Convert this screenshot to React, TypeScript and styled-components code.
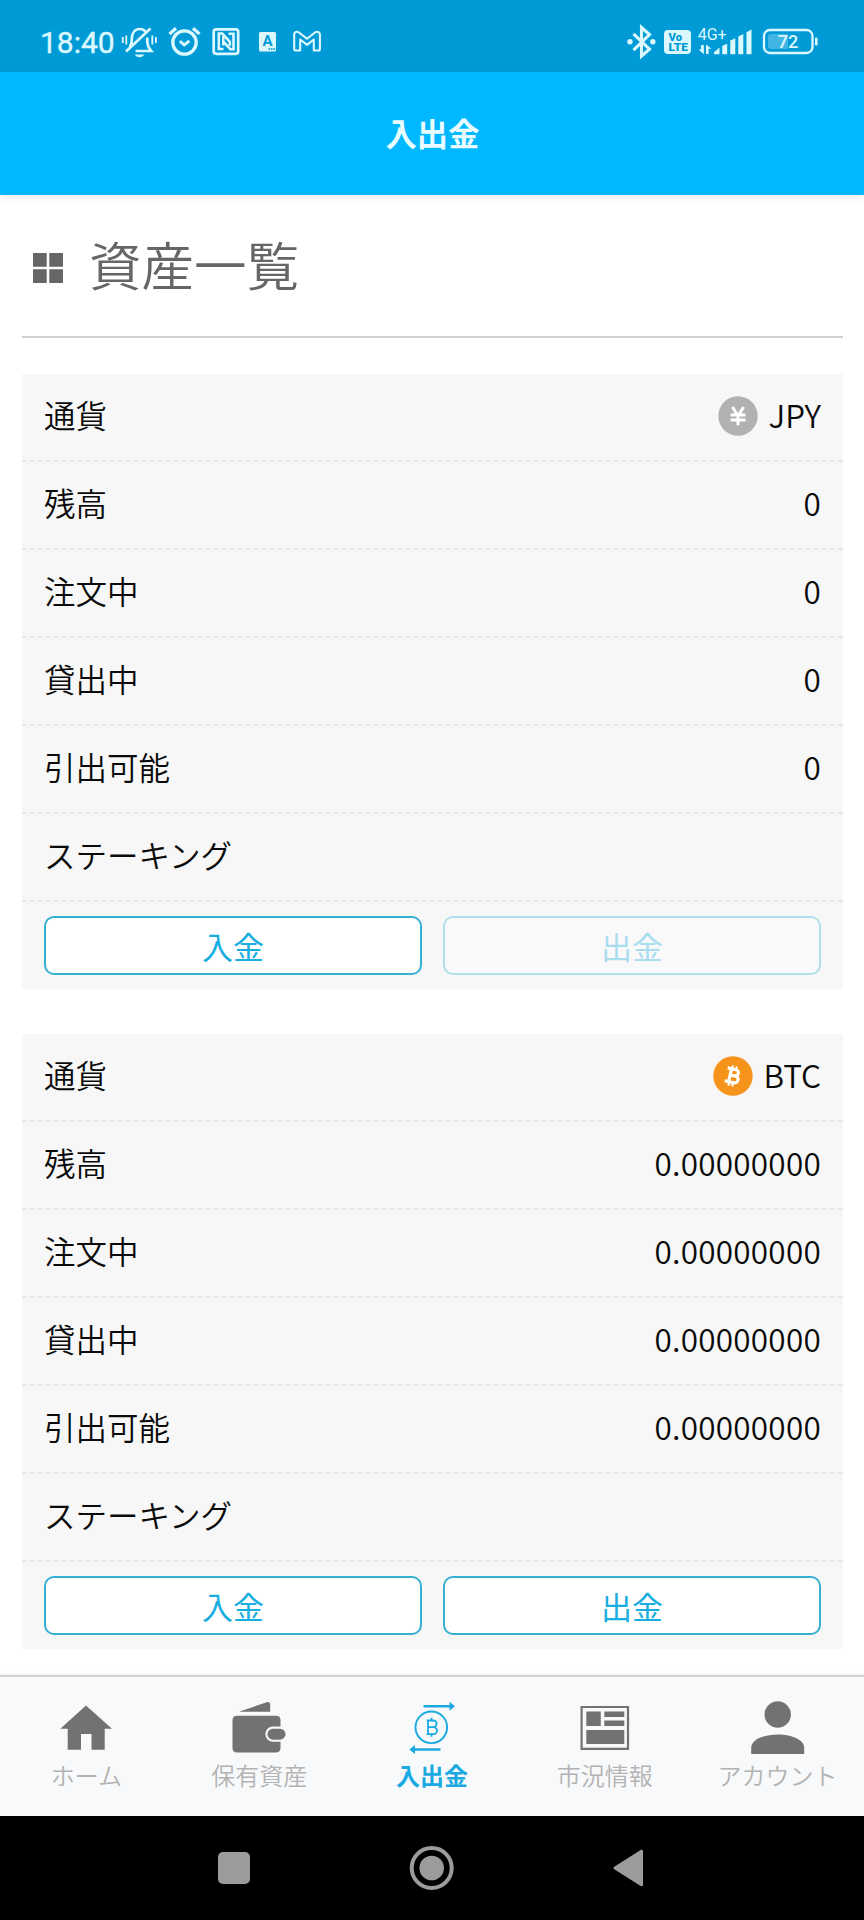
import React from "react";
import styled, { createGlobalStyle } from "styled-components";

const GlobalStyle = createGlobalStyle`
  * { box-sizing: border-box; }
  body {
    margin: 0;
    background: #fff;
    font-family: "Noto Sans CJK JP", sans-serif;
    color: #0a0a0a;
  }
`;

const Screen = styled.div`
  width: 864px;
  height: 1920px;
  display: flex;
  flex-direction: column;
  overflow: hidden;
  background: #fff;
`;

const StatusBar = styled.div`
  height: 72px;
  flex: none;
  display: flex;
  justify-content: space-between;
  padding: 24px 46px 0 40px;
  background: #009bd7;
  color: #dcf8ff;
`;

const StatusGroup = styled.div`
  display: flex;
  height: 36px;
`;

const Clock = styled.span`
  width: 81px;
  font: 400 30px/38px Roboto, sans-serif;
  -webkit-text-stroke: 0.4px currentColor;
`;

const Glyph = styled.svg<{ $gap?: number }>`
  display: block;
  flex: none;
  overflow: visible;
  margin-left: ${(p) => p.$gap ?? 0}px;
`;

const AppBar = styled.header`
  height: 123px;
  flex: none;
  display: flex;
  align-items: center;
  justify-content: center;
  background: #00b8ff;
  color: #e9fcff;
  box-shadow: 0 2px 8px rgba(60, 40, 90, 0.12);
  font-size: 31.3px;
  font-weight: 700;
  line-height: 46px;
  padding: 0 0 2px 1px;
`;

const Content = styled.main`
  flex: 1;
  min-height: 0;
  overflow: hidden;
  padding: 0 21px 0 22px;
`;

const Heading = styled.h1`
  display: flex;
  align-items: center;
  height: 143px;
  margin: 0 0 36px;
  padding: 4px 0 0 11px;
  border-bottom: 2px solid #cfcfcf;
  font-size: 52.5px;
  font-weight: 350;
  line-height: 78px;
  color: #666;
`;

const HeadingText = styled.span`
  margin: -10px 0 0 26px;
`;

const Card = styled.section`
  height: 615px;
  margin-bottom: 45px;
  background: #f7f7f7;
`;

const Row = styled.div`
  display: flex;
  align-items: center;
  justify-content: space-between;
  height: 88px;
  padding: 0 22px 8px;
  font-size: 31.5px;
  line-height: 46px;
  font-weight: 350;
`;

const DashLine = styled.svg`
  display: block;
  width: 100%;
  height: 2px;
  margin-top: -2px;
`;

const Value = styled.span`
  display: flex;
  align-items: center;
  gap: 10px;
`;

const Amount = styled.span`
  letter-spacing: 0.25px;
`;

const CoinIcon = styled.svg`
  width: 40px;
  height: 40px;
  margin-top: 4px;
`;

const Actions = styled.div`
  display: flex;
  gap: 21px;
  padding: 14px 22px;
`;

const ActionButton = styled.button`
  flex: 1;
  height: 59px;
  padding: 1px 0 0;
  border: 2px solid #35b0d2;
  border-radius: 10px;
  background: #fff;
  color: #19aee0;
  font-family: inherit;
  font-size: 31px;
  font-weight: 400;
  line-height: 46px;
  &:disabled { opacity: 0.35; }
`;

const TabBar = styled.nav`
  height: 141px;
  flex: none;
  display: grid;
  grid-template-columns: repeat(5, 1fr);
  border-top: 2px solid #d3d3d4;
  background: #f8f9fb;
  box-shadow: 0 -1px 3px rgba(0, 0, 0, 0.08);
`;

const Tab = styled.a<{ $active?: boolean }>`
  display: flex;
  flex-direction: column;
  align-items: center;
  padding-top: 21px;
  font-size: 24px;
  line-height: 36px;
  white-space: nowrap;
  font-weight: ${(p) => (p.$active ? 700 : 350)};
  color: ${(p) => (p.$active ? "#1ba9e1" : "#b3b3b3")};
`;

const TabIcon = styled.svg`
  display: block;
  width: 56px;
  height: 56px;
  margin-bottom: 3px;
  overflow: visible;
`;

const SystemNav = styled.div`
  height: 104px;
  flex: none;
  display: flex;
  justify-content: center;
  align-items: center;
  gap: 144px;
  background: #000;
`;

const StatusIcons = () => (
  <StatusGroup>
    <Clock>18:40</Clock>
    <Glyph width="36" height="36" viewBox="0 0 36 36" fill="none" stroke="currentColor" strokeWidth="2.700">
      <path d="M8.500 23c2-2 2.300-4 2.300-8 0-6 3.200-10 8-10 2.500 0 4.500 1 5.500 2.500M26.300 13.500v4c0 4 1.500 6.500 4 9.500H14.500M5 27.500 29.500 4.500" />
      <path d="M14 30.500h9c-1 3.500-8 3.500-9 0z" fill="currentColor" stroke="none" />
      <path d="M1.700 13v6M5.300 11.500v9M31.300 11.500v9M34.900 13v6" strokeWidth="1.800" />
    </Glyph>
    <Glyph $gap={11} width="33" height="36" viewBox="0 0 33 36" fill="none" stroke="currentColor">
      <circle cx="16.500" cy="18.500" r="11.700" strokeWidth="3.300" />
      <path d="M1.500 10 8 4.200M25 4.200 31.500 10" strokeWidth="3.200" />
      <path d="m11.800 17.200 4.400 3.600 5.200-4" strokeWidth="2.900" />
    </Glyph>
    <Glyph $gap={11} width="28" height="36" viewBox="0 0 28 36" fill="none" stroke="currentColor" strokeWidth="2.700">
      <rect x="1.700" y="5.300" width="24.500" height="24.500" rx="2.500" />
      <path d="M11.500 25H6.800V9.500h3.500l7.500 8.300v4M11.300 12v9.500M16.500 9.800h5v15.400h-3.200l-7-7.700" strokeWidth="2.600" />
    </Glyph>
    <Glyph $gap={19} width="17" height="36" viewBox="0 0 17 36">
      <rect y="8" width="17" height="19.500" rx="1.500" fill="currentColor" />
      <text x="8.500" y="22" textAnchor="middle" fontSize="15" fontWeight="700" fontFamily="Roboto, sans-serif" fill="#009bd7">A</text>
      <path d="M9.500 25h6.500" stroke="#009bd7" strokeWidth="1.500" strokeDasharray="1.700 0.700" />
    </Glyph>
    <Glyph $gap={17} width="28" height="36" viewBox="0 0 28 36" fill="none" stroke="currentColor" strokeWidth="2.100" strokeLinejoin="round">
      <path d="M7.200 15.500v11H2.700c-1 0-1.500-.6-1.500-1.500V10.500C1.200 7.700 4 7 6 8.500l8 6.300 8-6.300c2-1.500 4.900-.8 4.900 2V25c0 .9-.6 1.500-1.500 1.500h-4.600v-11L14 20.800z" />
    </Glyph>
  </StatusGroup>
);

const SignalIcons = () => (
  <StatusGroup>
    <Glyph width="30" height="36" viewBox="0 0 30 36" fill="none" stroke="currentColor" strokeWidth="3.100">
      <path d="m6.500 9.800 16 15.300-8 6.900V3.500l8 7-16 15.700" />
      <circle cx="3" cy="17.800" r="2.700" fill="currentColor" stroke="none" />
      <circle cx="25.800" cy="17.800" r="2.700" fill="currentColor" stroke="none" />
    </Glyph>
    <Glyph $gap={7} width="27" height="36" viewBox="0 0 27 36" fill="#009bd7" fontFamily="Roboto, sans-serif" fontWeight="900" fontSize="10.500">
      <rect y="6" width="27" height="24" rx="4" fill="currentColor" />
      <text x="4.500" y="16.500" textLength="13.500" lengthAdjust="spacingAndGlyphs">Vo</text>
      <text x="4.500" y="27" textLength="19.500" lengthAdjust="spacingAndGlyphs">LTE</text>
    </Glyph>
    <Glyph $gap={7} width="54" height="36" viewBox="0 0 54 36" fill="currentColor">
      <text x="-0.300" y="15.500" fontSize="16.800" fontFamily="Roboto, sans-serif" textLength="29" lengthAdjust="spacingAndGlyphs">4G+</text>
      <path d="M3 21v4.500H.6l5.200 4.800V21zM8 20.500V30h2.600v-5.300h2.900z" />
      <path d="M16 30.300v-2l5.500-4.800v6.800zM24.300 30.300v-8.500l4.900-2v10.500zM32.300 30.300V16.500l5-2.200v16zM40.300 30.300V12.500l5-2.500v20.300zM48.500 30.300V8.200l5-2.700v24.800z" />
    </Glyph>
    <Glyph $gap={11} width="55" height="36" viewBox="0 0 55 36">
      <rect x="1" y="6" width="48.500" height="23" rx="6" fill="none" stroke="currentColor" strokeWidth="2.300" />
      <path d="M8 10h17v15H8a3 3 0 0 1-3-3v-9a3 3 0 0 1 3-3z" fill="#43b5e2" />
      <rect x="52" y="13.500" width="2.600" height="8" rx="1.200" fill="currentColor" />
      <text x="25" y="24.300" textAnchor="middle" fontSize="18" fontWeight="500" fontFamily="Roboto, sans-serif" fill="currentColor">72</text>
    </Glyph>
  </StatusGroup>
);

const YenIcon = () => (
  <CoinIcon viewBox="0 0 40 40">
    <circle cx="20" cy="20" r="19.700" fill="#b1b1b1" />
    <path d="m14.500 11 5.500 9 5.500-9M20 20v9.200M12.500 19h15M12.500 24h15" fill="none" stroke="#fff" strokeWidth="3" />
  </CoinIcon>
);

const BitcoinIcon = () => (
  <CoinIcon viewBox="0 0 40 40">
    <circle cx="20" cy="20" r="19.700" fill="#f6931a" />
    <g transform="rotate(13 20 20)" fill="none" stroke="#fff">
      <path d="M13 13.300h8.500a3 3 0 0 1 0 6.200h-4.500M17 19.500h5.300a3.500 3.500 0 0 1 0 7H13M17 13.300v13.200" strokeWidth="3.200" />
      <path d="M17.600 9.800v4M21.600 9.800v4M17.600 26.500v4M21.600 26.500v4" strokeWidth="2.100" />
    </g>
  </CoinIcon>
);

const LABELS = ["残高", "注文中", "貸出中", "引出可能"];

const Divider = () => (
  <DashLine>
    <line x1="0" y1="1" x2="821" y2="1" stroke="#e7e8e8" strokeWidth="2" strokeDasharray="5 3" />
  </DashLine>
);

type CurrencyProps = { code: string; amount: string; icon: React.ReactNode; locked?: boolean };

const CurrencyCard = ({ code, amount, icon, locked }: CurrencyProps) => (
  <Card>
    <Row>
      <span>通貨</span>
      <Value>{icon}<span>{code}</span></Value>
    </Row>
    <Divider />
    {LABELS.map((label) => (
      <React.Fragment key={label}>
        <Row><span>{label}</span><Amount>{amount}</Amount></Row>
        <Divider />
      </React.Fragment>
    ))}
    <Row><span>ステーキング</span></Row>
    <Divider />
    <Actions>
      <ActionButton>入金</ActionButton>
      <ActionButton disabled={locked}>出金</ActionButton>
    </Actions>
  </Card>
);

export default function App() {
  return (
    <Screen>
      <GlobalStyle />
      <StatusBar>
        <StatusIcons />
        <SignalIcons />
      </StatusBar>
      <AppBar>入出金</AppBar>
      <Content>
        <Heading>
          <svg width="30" height="30" viewBox="0 0 30 30" fill="#666">
            <path d="M0 0h13.700v13.700H0zM16.300 0H30v13.700H16.300zM0 16.300h13.700V30H0zM16.300 16.300H30V30H16.300z" />
          </svg>
          <HeadingText>資産一覧</HeadingText>
        </Heading>
        <CurrencyCard code="JPY" amount="0" icon={<YenIcon />} locked />
        <CurrencyCard code="BTC" amount="0.00000000" icon={<BitcoinIcon />} />
      </Content>
      <TabBar>
        <Tab>
          <TabIcon viewBox="0 0 56 56" fill="#727272">
            <path d="M28 7.500 54 30.700h-7.300v21H33.500V36H23v15.700H9.700v-21H2.300z" />
          </TabIcon>
          ホーム
        </Tab>
        <Tab>
          <TabIcon viewBox="0 0 56 56" fill="#727272">
            <path d="M8 13.700 35.800 4.200c2-.6 3.400.4 3.400 2.300v7.200z" />
            <path d="M6 17.700h39c2.800 0 4.500 1.600 4.500 4.200v6.500H42a7.700 7.700 0 0 0 0 15.400h7.500v6.500c0 2.600-1.700 4.200-4.500 4.200H6c-2.700 0-4.500-1.600-4.500-4.200V21.900c0-2.600 1.800-4.200 4.500-4.200z" />
            <rect x="36.500" y="30.700" width="18" height="11" rx="5.500" />
          </TabIcon>
          保有資産
        </Tab>
        <Tab $active>
          <TabIcon viewBox="0 0 56 56" fill="none" stroke="currentColor">
            <circle cx="27.300" cy="29.300" r="15.800" strokeWidth="1.900" />
            <path d="M19.500 8.200H46M10 51.500h26.500" strokeWidth="2.500" />
            <path d="m45.500 3.700 5.500 4.500-5.500 4.500zM11 47l-5.700 4.500L11 56z" fill="currentColor" stroke="none" />
            <path d="M22.700 22.500h6.600a3.300 3.300 0 0 1 0 6.600H24M29.500 29.100a3.500 3.500 0 0 1 0 7H22.700M24 22.500v13.600M27.500 19.800v2.700M27.500 36.100v2.700" strokeWidth="1.800" />
          </TabIcon>
          入出金
        </Tab>
        <Tab>
          <TabIcon viewBox="0 0 56 56" fill="#727272">
            <path d="M4.600 9H51v41.800H4.600z" fill="none" stroke="#727272" strokeWidth="2.200" />
            <path d="M9.300 13.500h14.500v14.500H9.300zM27.300 13.500h20v5.500h-20zM27.300 22.500h20v5.500h-20zM9.300 32h38v14h-38z" />
          </TabIcon>
          市況情報
        </Tab>
        <Tab>
          <TabIcon viewBox="0 0 56 56" fill="#727272">
            <circle cx="27.700" cy="16.500" r="13.200" />
            <path d="M1.200 56V50C1.200 42 13 36.500 27.700 36.500S54.200 42 54.200 50v6z" />
          </TabIcon>
          アカウント
        </Tab>
      </TabBar>
      <SystemNav>
        <svg width="54" height="54" viewBox="0 0 54 54"><rect x="11" y="11" width="32" height="32" rx="5" fill="#9c9c9c" /></svg>
        <svg width="54" height="54" viewBox="0 0 54 54" fill="none" stroke="#9c9c9c">
          <circle cx="26.700" cy="27" r="20" strokeWidth="4" />
          <circle cx="26.700" cy="27" r="12.300" fill="#9c9c9c" stroke="none" />
        </svg>
        <svg width="54" height="54" viewBox="0 0 54 54" fill="#9c9c9c" stroke="#9c9c9c" strokeWidth="3" strokeLinejoin="round">
          <path d="M12 27 38.500 10.200v33.600z" />
        </svg>
      </SystemNav>
    </Screen>
  );
}
